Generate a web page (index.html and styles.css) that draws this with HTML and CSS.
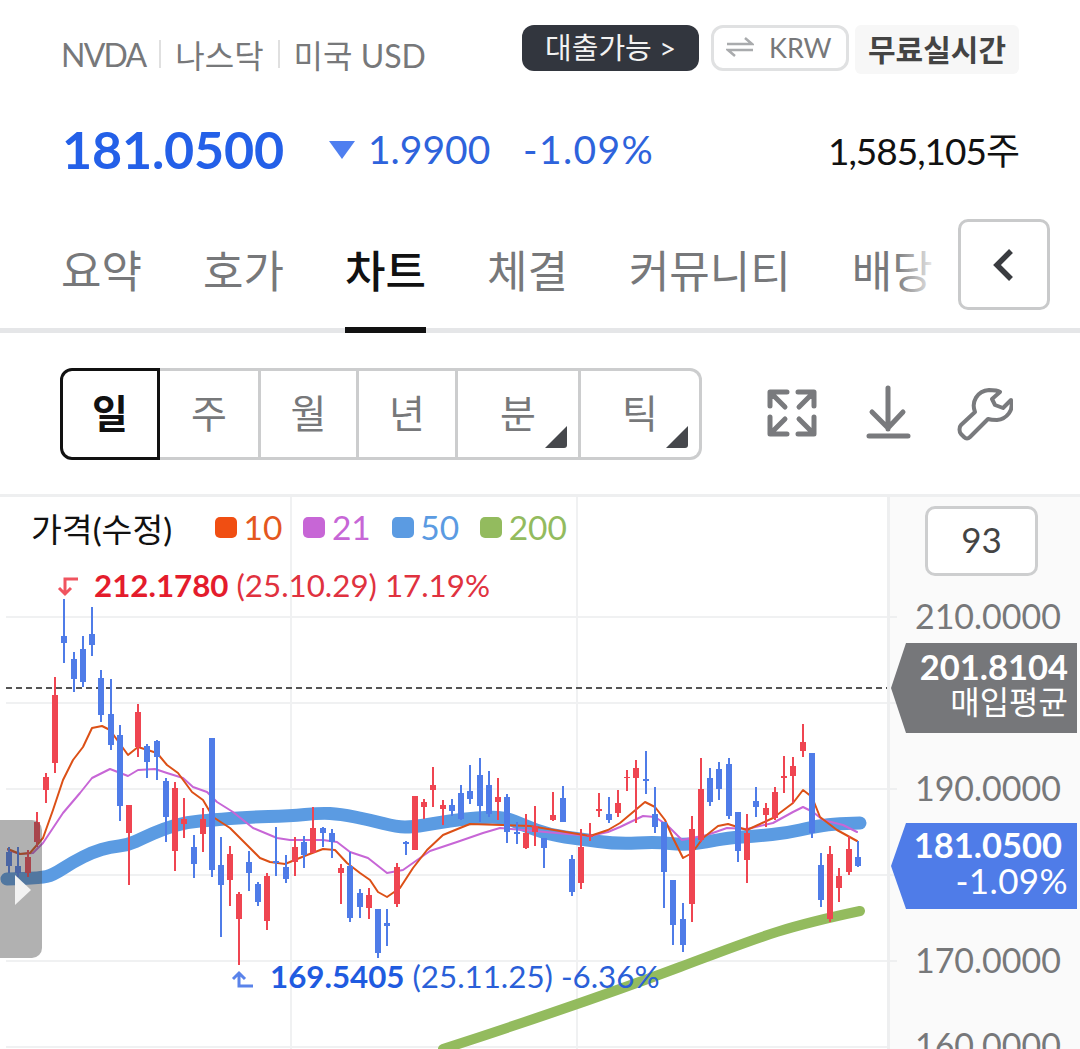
FILE: index.html
```html
<!DOCTYPE html>
<html lang="ko">
<head>
<meta charset="utf-8">
<title>NVDA 차트</title>
<link rel="stylesheet" href="styles.css">
</head>
<body>
<div class="page">
  <header class="head">
    <div class="ident">
      <span class="ticker">NVDA</span><i class="sep"></i><span>나스닥</span><i class="sep"></i><span>미국 USD</span>
    </div>
    <div class="badges">
      <span class="badge-loan">대출가능 &gt;</span>
      <span class="badge-krw">
        <svg class="swap" viewBox="0 0 28 20"><path d="M1 7H26L19 1M27 13H2L9 19"/></svg>
        KRW
      </span>
      <span class="badge-free">무료실시간</span>
    </div>
  </header>

  <section class="quote">
    <strong class="price">181.0500</strong>
    <svg class="down" viewBox="0 0 28 20"><path d="M1 1H27L14 19Z"/></svg>
    <span class="diff">1.9900</span>
    <span class="rate">-1.09%</span>
    <span class="volume">1,585,105주</span>
  </section>

  <nav class="tabs">
    <a class="tab">요약</a>
    <a class="tab">호가</a>
    <a class="tab active">차트</a>
    <a class="tab">체결</a>
    <a class="tab">커뮤니티</a>
    <a class="tab">배당</a>
    <span class="tab-fade"></span>
    <button class="collapse"><svg viewBox="0 0 24 34"><path d="M19 3L5 17L19 31"/></svg></button>
  </nav>

  <section class="toolbar">
    <div class="segment">
      <span class="cell c1 on">일</span>
      <span class="cell c2">주</span>
      <span class="cell c3">월</span>
      <span class="cell c4">년</span>
      <span class="cell c5">분<svg class="corner" viewBox="0 0 24 23"><path d="M23 1V20a3 3 0 0 1-3 3H1Z"/></svg></span>
      <span class="cell c6">틱<svg class="corner" viewBox="0 0 24 23"><path d="M23 1V20a3 3 0 0 1-3 3H1Z"/></svg></span>
    </div>
    <div class="tools">
      <svg class="tool t-expand" viewBox="0 0 50 48"><path d="M3 17V3H20M5 5L18 18M31 3H47V17M45 5L32 18M3 28V45H20M5 43L18 30M47 28V45H31M45 43L32 30"/></svg>
      <svg class="tool t-down" viewBox="0 0 50 56"><path d="M24 3V44M8 27L24 43L39 27M5 51H44"/></svg>
      <svg class="tool t-wrench" viewBox="0 0 56 54"><path d="M4 38L18 25C14 15 20 4 32 3C36 3 40 3 43 5L35 12L38 18L46 21L54 13C57 23 50 32 40 33C37 33 34 33 31 32L13 50C11 52 9 52 7 50L4 47C2 45 2 40 4 38Z"/></svg>
    </div>
  </section>

  <section class="chart">
    <div class="plot">
      <svg class="canvas" viewBox="0 494 887 555">
        <path class="top-rule" d="M0 495.5H887"/>
        <path class="grid" d="M6 617H887M6 703H887M6 789H887M6 875H887M6 961H887M6 1047H887M291 497V1049M577 497V1049"/>
        <path class="avg" d="M6 688H887"/>
        <path class="ma ma200" d="M443 1049C520 1024 600 997 680 967S780 928 860 911"/>
        <path class="ma ma50" d="M7 879L23 878.5Q40 878 46.5 876.5Q53 875 63 868.5Q73 862 83 857Q93 852 101.5 849.5Q110 847 119 846Q128 845 135.5 841.5Q143 838 153 833.5Q163 829 175 825.5Q187 822 200 821Q213 820 230 818.5Q247 817 268.5 816.5Q290 816 305 814.5Q320 813 330 813.5Q340 814 355 817Q370 820 383.5 823.5Q397 827 405 827Q413 827 425 825Q437 823 450 821Q463 819 476.5 818Q490 817 498.5 817.5Q507 818 515 821.5Q523 825 536.5 830Q550 835 565 837Q580 839 598.5 841.5Q617 844 637 843Q657 842 670 843.5Q683 845 695 843.5Q707 842 717 840Q727 838 742 837Q757 836 772 834.5Q787 833 800 830Q813 827 823 825.5Q833 824 846.5 823.5L860 823"/>
        <path class="ma ma21" d="M8 850L20 854L33 853L43 843L63 813L80 793L92 778L110 769L128 776L138 770L155 769L167 773L183 778L193 787L207 792L217 802L233 812L253 828L277 838L290 840L323 840L337 842L350 852L368 858L387 873L403 870L430 851L457 842L483 833L500 828L523 830L590 836L608 832L620 827L643 816L655 817L667 825L682 840L707 835L727 828L747 829L773 823L793 812L803 807L813 812L823 820L843 825L857 832"/>
        <path class="ma ma10" d="M8 849L20 854L30 853L43 838L53 810L63 780L73 760L83 747L92 728L102 726L110 730L128 755L138 747L157 753L167 765L178 773L192 792L203 800L213 817L230 828L247 845L260 858L270 862L285 864L307 855L323 849L335 850L347 863L360 873L370 880L378 892L387 897L400 888L413 868L427 850L443 835L460 828L470 824L530 826L590 836L608 830L620 823L645 802L655 807L665 820L673 838L683 858L692 853L703 838L718 826L728 824L747 830L773 818L793 803L803 790L812 797L820 817L837 830L857 841"/>

        <path class="wick up" d="M28 850V877M37 812V847M46 773V803M55 677V773M129 805V885M138 704V757M175 782V871M184 798V838M203 808V852M230 846V906M239 892V965M267 873V930M295 837V876M313 807V853M341 864V904M369 888V919M397 863V907M415 796V850M424 799V819M433 767V807M443 800V825M498 778V820M526 814V849M535 806V846M553 792V821M581 829V889M590 823V841M599 793V817M618 790V817M627 770V791M636 760V823M692 816V922M701 758V842M747 814V883M766 803V827M775 787V820M784 756V793M793 757V803M803 724V757M830 846V922M839 868V902M849 836V875"/>
        <path class="body up" d="M28 857V873M37 822V842M46 777V790M55 695V763M129 805V833M138 712V747M175 788V851M184 819V824M203 819V834M230 854V880M239 894V919M267 876V921M295 847V862M313 828V853M341 868V873M369 895V908M397 867V904M415 796V850M424 802V807M433 785V790M443 805V809M498 797V802M526 833V848M535 826V832M553 815V820M581 847V883M590 835V837M599 809V811M618 803V813M627 777V778M636 768V778M692 829V904M701 789V840M747 833V860M766 808V815M775 792V818M784 776V778M793 766V776M803 742V751M830 854V919M839 876V888M849 849V872"/>
        <path class="wick dn" d="M9 847V873M18 847V877M64 599V663M74 652V692M83 636V687M92 607V656M101 670V722M111 679V750M120 725V821M147 744V778M157 740V780M166 778V842M194 835V878M212 738V877M221 837V937M249 851V891M258 882V906M276 827V876M286 855V883M304 836V868M323 827V847M332 829V858M350 852V922M360 889V918M378 909V958M387 909V946M406 841V855M452 799V816M461 785V820M470 765V804M480 758V822M489 771V817M507 794V843M517 822V844M544 838V868M563 786V822M572 855V896M609 797V823M646 751V794M655 787V833M664 822V908M673 880V945M683 903V952M710 768V806M719 762V800M729 758V819M738 812V862M756 787V817M812 753V838M821 853V907M858 841V867"/>
        <path class="body dn" d="M9 852V866M18 866V873M64 636V643M74 659V679M83 649V682M92 634V645M101 678V715M111 714V745M120 735V806M147 746V762M157 741V757M166 781V817M194 847V864M212 738V870M221 865V885M249 862V873M258 884V902M276 861V863M286 867V879M304 842V855M323 828V833M332 833V842M350 866V918M360 893V907M378 909V953M387 923V926M406 842V844M452 805V811M461 793V819M470 791V799M480 775V806M489 785V814M507 797V832M517 832V834M544 838V848M563 798V822M572 859V892M609 814V820M646 779V781M655 814V827M664 822V872M673 880V925M683 919V945M710 778V802M719 769V789M729 764V816M738 812V851M756 801V807M812 753V833M821 865V900M858 857V866"/>

        <path class="mark mark-hi" d="M78 579H65V593M59 588L65 594L71 588"/>
        <path class="mark mark-lo" d="M253 986H239V973M233 979L239 973L245 979"/>
      </svg>

      <div class="legend">
        <span class="legend-title">가격(수정)</span>
        <span class="key k10"><i></i>10</span>
        <span class="key k21"><i></i>21</span>
        <span class="key k50"><i></i>50</span>
        <span class="key k200"><i></i>200</span>
      </div>
      <div class="note note-hi"><b>212.1780</b> (25.10.29) 17.19%</div>
      <div class="note note-lo"><b>169.5405</b> (25.11.25) -6.36%</div>
      <div class="handle"><i></i></div>
    </div>

    <aside class="axis">
      <div class="count">93</div>
      <i class="tick y210"></i><i class="tick y200"></i><i class="tick y190"></i><i class="tick y180"></i><i class="tick y170"></i>
      <span class="level l210">210.0000</span>
      <span class="level l190">190.0000</span>
      <span class="level l170">170.0000</span>
      <span class="level l160">160.0000</span>
      <div class="tag tag-avg"><b>201.8104</b><span>매입평균</span></div>
      <div class="tag tag-now"><b>181.0500</b><span>-1.09%</span></div>
    </aside>
  </section>
</div>
</body>
</html>
```
FILE: styles.css
```css
* { box-sizing: border-box; }
html, body { margin: 0; padding: 0; background: #fff; }
body { font-family: Lato, "Noto Sans CJK KR", sans-serif; color: #111; }
.page { width: 1080px; height: 1049px; overflow: hidden; }

/* header */
.head { height: 110px; padding: 25px 61px 0 61px; display: flex; justify-content: space-between; align-items: flex-start; }
.ident { display: flex; align-items: center; height: 58px; font-size: 32px; color: #77787a; }
.ident span { white-space: pre; }
.ticker { letter-spacing: -1.8px; }
.sep { width: 2px; height: 28px; background: #e0e0e0; margin: 0 14px; }
.badges { display: flex; align-items: flex-start; }
.badge-loan { width: 177px; height: 46px; background: #32363e; color: #f2f2f2; border-radius: 12px; font-size: 29px; display: flex; align-items: center; justify-content: center; margin-right: 12px; padding-bottom: 4px; }
.badge-krw { width: 138px; height: 46px; border: 3px solid #e0e1e2; border-radius: 12px; color: #77787a; font-size: 27px; display: flex; align-items: center; justify-content: flex-start; padding: 0 0 2px 12px; gap: 15px; margin-right: 6px; }
.swap { width: 28px; height: 20px; fill: none; stroke: #a9abad; stroke-width: 2.5; }
.badge-free { width: 164px; height: 49px; background: #f7f7f7; border-radius: 6px; font-size: 30px; font-weight: 700; color: #444; display: flex; align-items: center; justify-content: center; padding-bottom: 4px; }

/* quote */
.quote { height: 109px; padding: 6px 61px 0 62px; display: flex; align-items: center; margin-top: -19px; }
.price { font-size: 52px; font-weight: 700; color: #2460e8; width: 266px; letter-spacing: -0.2px; }
.down { width: 28px; height: 20px; fill: #4f7ff0; margin-right: 12px; margin-top: 3px; }
.diff { font-size: 39px; color: #2e63dc; width: 155px; font-weight: 400; }
.rate { font-size: 39px; color: #2e63dc; letter-spacing: 1.4px; }
.volume { font-size: 37px; color: #111; margin-left: auto; letter-spacing: -1px; }

/* tabs */
.tabs { position: relative; height: 114px; margin-top: 19px; padding-left: 61px; display: flex; gap: 61px; align-items: flex-start; border-bottom: 5px solid #e5e6e8; }
.tab { height: 114px; padding-top: 21px; line-height: 62px; font-size: 44px; color: #77787a; border-bottom: 6px solid transparent; white-space: nowrap; }
.tab.active { color: #111; font-weight: 500; border-bottom-color: #111; }
.tab-fade { position: absolute; left: 895px; top: 20px; width: 45px; height: 80px; background: linear-gradient(to right, rgba(255,255,255,0), #fff); }
.collapse { position: absolute; left: 958px; top: 0; width: 92px; height: 91px; background: #fff; border: 3px solid #c9cacb; border-radius: 10px; padding: 0; display: flex; align-items: center; justify-content: center; }
.collapse svg { width: 24px; height: 34px; fill: none; stroke: #3a3c40; stroke-width: 5.5; }

/* toolbar */
.toolbar { height: 161px; padding: 35px 0 0 60px; display: flex; align-items: flex-start; }
.segment { display: flex; height: 92px; font-size: 39px; color: #77787a; }
.cell { position: relative; height: 92px; border: 3px solid #cccdce; border-left: 0; display: flex; align-items: center; justify-content: center; padding-bottom: 6px; }
.cell.on { border: 3px solid #111; border-radius: 12px 0 0 12px; color: #111; font-weight: 700; }
.c1 { width: 100px; } .c2 { width: 101px; } .c3 { width: 98px; } .c4 { width: 99px; } .c5 { width: 123px; }
.c6 { width: 121px; border-radius: 0 12px 12px 0; }
.corner { position: absolute; right: 10px; bottom: 9px; width: 24px; height: 23px; fill: #46484c; }
.tools { position: relative; display: flex; margin-left: 65px; margin-top: 20px; align-items: flex-start; }
.tool { fill: none; stroke: #797a7d; stroke-width: 5; stroke-linecap: round; stroke-linejoin: round; }
.t-expand { width: 50px; height: 48px; margin-top: 1px; }
.t-down { width: 50px; height: 56px; margin-left: 47px; margin-top: -3px; }
.t-wrench { width: 56px; height: 54px; margin-left: 43px; margin-top: -1px; stroke-width: 4; }

/* chart */
.chart { display: flex; height: 555px; }
.plot { position: relative; width: 887px; height: 555px; }
.canvas { position: absolute; left: 0; top: 0; width: 887px; height: 555px; }
.top-rule { stroke: #eeeff0; stroke-width: 3; }
.grid { stroke: #f0f1f2; stroke-width: 2; fill: none; }
.avg { stroke: #555; stroke-width: 2; stroke-dasharray: 6 4; }
.ma { fill: none; stroke-linecap: round; stroke-linejoin: round; }
.ma200 { stroke: #93bb5e; stroke-width: 10; }
.ma50 { stroke: #5b9be2; stroke-width: 13; }
.ma21 { stroke: #c766d6; stroke-width: 2; }
.ma10 { stroke: #dc5016; stroke-width: 2; }
.wick { fill: none; stroke-width: 2; }
.body { fill: none; stroke-width: 6; }
.up { stroke: #ef4551; }
.dn { stroke: #4f7ce8; }
.mark { fill: none; stroke-width: 3; }
.mark-hi { stroke: #f0545f; }
.mark-lo { stroke: #5a83ea; }

.legend { position: absolute; left: 31px; top: 12px; height: 42px; display: flex; align-items: center; font-size: 33.5px; }
.legend-title { color: #111; font-size: 33.5px; margin-right: 43px; width: 141px; white-space: nowrap; }
.key { display: flex; align-items: center; gap: 6.5px; margin-right: 21px; }
.key i { width: 22px; height: 21px; border-radius: 5px; background: currentColor; }
.k10 { color: #e4571e; } .k10 i { background: #f04e12; }
.k21 { color: #c766d6; }
.k50 { color: #5b9be2; }
.k200 { color: #93bb5e; }

.note { position: absolute; font-size: 31.3px; white-space: nowrap; line-height: 40px; }
.note b { font-weight: 700; }
.note-hi { left: 94px; top: 71px; color: #e0323f; }
.note-hi b { color: #e41c2c; }
.note-lo { left: 270px; top: 462px; color: #2a5fd8; }
.note-lo b { color: #1f5be0; }

.handle { position: absolute; left: 0; top: 326px; width: 42px; height: 138px; background: rgba(70,70,70,.42); border-radius: 0 10px 10px 0; }
.handle i { position: absolute; left: 15px; top: 55px; width: 0; height: 0; border-left: 16px solid #f2f2f2; border-top: 15px solid transparent; border-bottom: 15px solid transparent; }

/* axis */
.axis { position: relative; width: 193px; height: 555px; background: #fafafa; border-left: 3px solid #eeeff0; border-top: 3px solid #eeeff0; }
.count { position: absolute; left: 35px; top: 9px; width: 113px; height: 70px; background: #fff; border: 3px solid #cdcecf; border-radius: 10px; display: flex; align-items: center; justify-content: center; font-size: 35px; color: #444; padding-bottom: 4px; }
.tick { position: absolute; left: 0; width: 7px; height: 2px; background: #eeeff0; }
.y210 { top: 119px; } .y200 { top: 205px; } .y190 { top: 291px; } .y180 { top: 377px; } .y170 { top: 463px; }
.level { position: absolute; right: 19px; font-size: 34px; line-height: 40px; color: #77787a; }
.l210 { top: 99px; } .l190 { top: 271px; } .l170 { top: 443px; } .l160 { top: 528px; }
.tag { position: absolute; left: 1px; width: 186px; color: #fff; clip-path: polygon(15px 0, 100% 0, 100% 100%, 15px 100%, 0 50%); display: flex; flex-direction: column; align-items: flex-end; padding: 0 9px 8px 0; justify-content: center; }
.tag b { font-size: 34.5px; line-height: 35px; font-weight: 700; }
.tag span { font-size: 32px; line-height: 36px; }
.tag-avg { top: 146px; height: 90px; background: #76777a; }
.tag-now { top: 326px; height: 86px; background: #4f7ce8; }
.tag-now b { padding-right: 6px; }
.tag-now span { font-size: 35px; letter-spacing: .4px; }
```
